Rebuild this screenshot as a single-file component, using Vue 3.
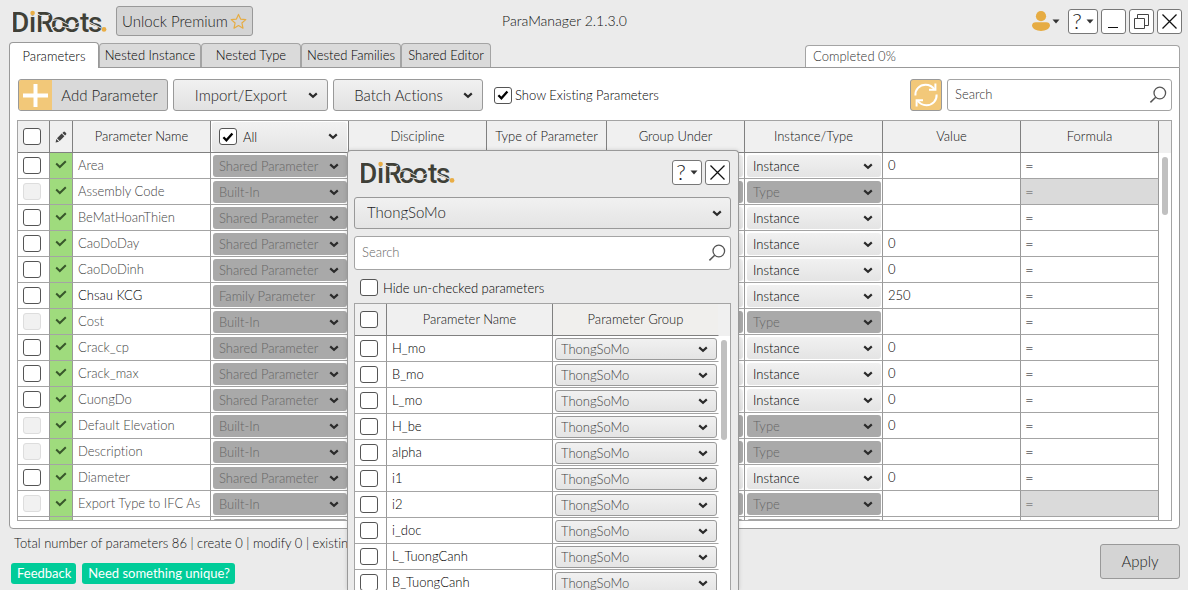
<script setup>
import { ref } from 'vue'

const tabs = [
  { label: 'Parameters', size: 'narrow' },
  { label: 'Nested Instance', size: 'wide' },
  { label: 'Nested Type', size: 'mid' },
  { label: 'Nested Families', size: 'mid' },
  { label: 'Shared Editor', size: 'narrow' },
]
const active = ref(0)

const S = 'Shared Parameter'
const B = 'Built-In'
const rows = [
  { name: 'Area', kind: S, value: '0' },
  { name: 'Assembly Code', kind: B, value: '', locked: true },
  { name: 'BeMatHoanThien', kind: S, value: '' },
  { name: 'CaoDoDay', kind: S, value: '0' },
  { name: 'CaoDoDinh', kind: S, value: '0' },
  { name: 'Chsau KCG', kind: 'Family Parameter', value: '250', own: true },
  { name: 'Cost', kind: B, value: '' },
  { name: 'Crack_cp', kind: S, value: '0' },
  { name: 'Crack_max', kind: S, value: '0' },
  { name: 'CuongDo', kind: S, value: '0' },
  { name: 'Default Elevation', kind: B, value: '0' },
  { name: 'Description', kind: B, value: '' },
  { name: 'Diameter', kind: S, value: '0' },
  { name: 'Export Type to IFC As', kind: B, value: '', locked: true },
  { name: '', kind: B, value: '' },
].map((r) => ({ ...r, builtIn: r.kind === B }))

const groupRows = ['H_mo', 'B_mo', 'L_mo', 'H_be', 'alpha', 'i1', 'i2', 'i_doc', 'L_TuongCanh', 'B_TuongCanh']
</script>

<template>
  <div class="app">
    <svg class="defs" aria-hidden="true">
      <symbol id="chev" viewBox="0 0 10 7"><path d="M1.2 1.4 5 4.8 8.8 1.4" fill="none" stroke="#2b2b2b" stroke-width="2.2" /></symbol>
      <symbol id="tick" viewBox="0 0 12 10"><path d="M1.4 5.2 4.4 8.2 10.4 1.4" fill="none" stroke="currentColor" stroke-width="2.3" /></symbol>
      <symbol id="flat-tick" viewBox="0 0 12 10"><path d="M1.2 3.6 4.8 7 10.8 1.2" fill="none" stroke="currentColor" stroke-width="2" /></symbol>
      <symbol id="caret" viewBox="0 0 8 5"><path d="M0.5 0.5H7.5L4 4.5Z" fill="#333" /></symbol>
      <symbol id="lens" viewBox="0 0 18 18"><circle cx="10.8" cy="7" r="5.8" fill="none" stroke="#555" stroke-width="1.3" /><path d="M6.7 11.2 1.4 16.4" stroke="#555" stroke-width="1.5" /></symbol>
      <symbol id="close" viewBox="0 0 17 17"><path d="M1.5 1.5 15.5 15.5M15.5 1.5 1.5 15.5" stroke="#111" stroke-width="1.3" /></symbol>
      <symbol id="logo" viewBox="0 0 96 26">
        <text class="logo-text" x="-2 16 23 38 51 67 75" y="24" fill="#3f4037">DiRoots</text>
        <path d="M15 1h7v6h-7z" fill="#ebebeb" />
        <circle cx="19.6" cy="5" r="2.3" fill="#e9ad45" />
        <path d="M24 5.6Q30 10 37 6.6M29 9V19M38 13.5Q44 9.5 51 14.5T66 14M38 21Q45 16 52 19T66 19M76 14 88 20" fill="none" stroke="#ebebeb" stroke-width="1" />
        <circle cx="91" cy="21.4" r="2.4" fill="#e9ad45" />
      </symbol>
    </svg>

    <header class="top">
      <svg class="logo" role="img" aria-label="DiRoots"><use href="#logo" /></svg>
      <button class="btn premium">
        Unlock Premium
        <svg width="17" height="17" viewBox="0 0 17 17"><path d="M8.5 1.4 10.6 6.1 15.8 6.6 11.9 10 13 15.2 8.5 12.5 4 15.2 5.1 10 1.2 6.6 6.4 6.1Z" fill="none" stroke="#e6ac43" stroke-width="1.2" stroke-linejoin="round" /></svg>
      </button>
      <h1>ParaManager 2.1.3.0</h1>
      <div class="win">
        <button class="user" aria-label="Account">
          <svg width="18" height="20" viewBox="0 0 18 20"><circle cx="9" cy="5.2" r="5.1" fill="#e6ac43" /><path d="M0 14.6C0 12.4 1.6 11.2 3.8 11.2H14.2C16.4 11.2 18 12.4 18 14.6C17.6 18 13.6 20 9 20S0.4 18 0 14.6Z" fill="#e6ac43" /></svg>
          <svg width="8" height="5"><use href="#caret" /></svg>
        </button>
        <button class="sq help"><span>?</span><svg width="8" height="5"><use href="#caret" /></svg></button>
        <button class="sq" aria-label="Minimize"><svg width="17" height="17"><path d="M3 14.5H13" stroke="#111" /></svg></button>
        <button class="sq" aria-label="Restore"><svg width="17" height="17" fill="none" stroke="#444"><path d="M1.5 5.5H11.5V15.5H1.5ZM4.5 5.5V1.5H15.5V12.5H11.5" /></svg></button>
        <button class="sq" aria-label="Close"><svg width="17" height="17"><use href="#close" /></svg></button>
      </div>
    </header>

    <nav class="tabs">
      <button v-for="(t, i) in tabs" :key="t.label" :class="['tab', t.size, { on: i === active }]" @click="active = i">{{ t.label }}</button>
      <div class="progress">Completed 0%</div>
    </nav>

    <main class="panel">
      <div class="tools">
        <button class="btn add">
          <span class="plus"><svg width="25" height="25"><path d="M12.5 1V24M0 12.5H25" stroke="#fff" stroke-width="4" /></svg></span>
          <span class="grow">Add Parameter</span>
        </button>
        <button class="btn drop imp"><span class="grow">Import/Export</span><svg width="10" height="7"><use href="#chev" /></svg></button>
        <button class="btn drop"><span class="grow">Batch Actions</span><svg width="10" height="7"><use href="#chev" /></svg></button>
        <label class="show"><span class="cb"><input type="checkbox" checked /><svg><use href="#tick" /></svg></span>Show Existing Parameters</label>
        <button class="refresh" aria-label="Refresh">
          <svg width="26" height="26" viewBox="0 0 26 26" fill="none" stroke="#fff" stroke-width="2"><path d="M2.4 13.5C2 7.5 6.5 2.8 12.5 2.8C16.5 2.8 19.5 4.6 21.6 7.8M23.6 12.5C24 18.5 19.5 23.2 13.5 23.2C9.5 23.2 6.5 21.4 4.4 18.2" /><path d="M22.4 1.4V7.8H16M3.6 24.6V18.2H10" /></svg>
        </button>
        <div class="search main-search"><input type="text" placeholder="Search" aria-label="Search parameters" /><svg width="18" height="18"><use href="#lens" /></svg></div>
      </div>

      <div class="grid-box">
        <table class="main-grid">
          <colgroup><col class="c-check" /><col class="c-edit" /><col class="c-std" /><col class="c-std" /><col class="c-std" /><col class="c-type" /><col class="c-std" /><col class="c-std" /><col class="c-std" /><col class="c-std" /></colgroup>
          <thead>
            <tr>
              <th class="ck"><span class="cb"><input type="checkbox" aria-label="Select all" /></span></th>
              <th class="ic"><svg width="12" height="12" viewBox="0 0 12 12" fill="#444"><path d="M0.6 11.4 1.3 8 4 10.7ZM2 7.3 6.7 2.6 9.4 5.3 4.7 10ZM7.4 1.9 8.4 0.9Q9.2 0.3 10 1L11 2Q11.7 2.8 11.1 3.6L10.1 4.6Z" /></svg></th>
              <th>Parameter Name</th>
              <th class="all-cell"><div class="all"><label><span class="cb"><input type="checkbox" checked /><svg><use href="#tick" /></svg></span>All</label><svg width="10" height="7"><use href="#chev" /></svg></div></th>
              <th>Discipline</th>
              <th>Type of Parameter</th>
              <th>Group Under</th>
              <th>Instance/Type</th>
              <th>Value</th>
              <th>Formula</th>
            </tr>
          </thead>
          <tbody>
            <tr v-for="(r, i) in rows" :key="i">
              <td class="ck"><span class="cb"><input type="checkbox" :disabled="r.builtIn" :aria-label="'Select ' + r.name" /></span></td>
              <td class="ok"><svg width="12" height="10"><use href="#flat-tick" /></svg></td>
              <td :class="['name', { own: r.own }]">{{ r.name }}</td>
              <td class="sc"><span class="sel off kind"><select disabled :aria-label="'Kind of ' + r.name"><option>{{ r.name ? r.kind : '' }}</option></select><svg><use href="#chev" /></svg></span></td>
              <td></td>
              <td></td>
              <td class="sc"><span :class="['sel', { off: r.builtIn }]"><select :disabled="r.builtIn" :aria-label="'Group of ' + r.name"></select><svg><use href="#chev" /></svg></span></td>
              <td class="sc"><span :class="['sel', { off: r.builtIn }]"><select :disabled="r.builtIn" :aria-label="'Instance or type of ' + r.name"><option>{{ !r.name ? '' : r.builtIn ? 'Type' : 'Instance' }}</option></select><svg><use href="#chev" /></svg></span></td>
              <td class="val">{{ r.value }}</td>
              <td :class="['eq', { locked: r.locked }]">{{ r.name ? '=' : '' }}</td>
            </tr>
          </tbody>
        </table>
        <div class="gutter"><i></i></div>
      </div>
    </main>

    <footer class="foot">
      <div>
        <p>Total number of parameters 86 | create 0 | modify 0 | existing</p>
        <div class="badges"><button>Feedback</button><button>Need something unique?</button></div>
      </div>
      <button class="btn apply">Apply</button>
    </footer>

    <section class="dialog" role="dialog" aria-label="ThongSoMo">
      <header>
        <svg class="logo" role="img" aria-label="DiRoots"><use href="#logo" /></svg>
        <div class="win">
          <button class="sq help"><span>?</span><svg width="8" height="5"><use href="#caret" /></svg></button>
          <button class="sq" aria-label="Close"><svg width="17" height="17"><use href="#close" /></svg></button>
        </div>
      </header>
      <span class="sel big"><select aria-label="Parameter file group"><option>ThongSoMo</option></select><svg><use href="#chev" /></svg></span>
      <div class="search tall"><input type="text" placeholder="Search" aria-label="Search group" /><svg width="18" height="18"><use href="#lens" /></svg></div>
      <label class="hide"><span class="cb"><input type="checkbox" /></span>Hide un-checked parameters</label>
      <div class="grid-box sub">
        <table>
          <colgroup><col class="d-check" /><col class="d-col" /><col class="d-col" /></colgroup>
          <thead>
            <tr><th class="ck"><span class="cb"><input type="checkbox" aria-label="Select all in group" /></span></th><th>Parameter Name</th><th class="last">Parameter Group</th></tr>
          </thead>
          <tbody>
            <tr v-for="n in groupRows" :key="n">
              <td class="ck"><span class="cb"><input type="checkbox" :aria-label="'Select ' + n" /></span></td>
              <td class="name own">{{ n }}</td>
              <td class="sc last"><span class="sel line"><select :aria-label="'Group of ' + n"><option>ThongSoMo</option></select><svg><use href="#chev" /></svg></span></td>
            </tr>
          </tbody>
        </table>
        <div class="gutter"><i></i></div>
      </div>
    </section>
  </div>
</template>

<style>
body { margin: 0; }
</style>

<style scoped>
* { box-sizing: border-box; }
.app {
  position: relative; display: flex; flex-direction: column; height: 100vh; overflow: hidden;
  padding: 0 8px 0 9px; background: #ebebeb; color: #222;
  font: 300 13px/16px Lato, "Open Sans", sans-serif; font-variant-ligatures: none;
}
.defs { position: absolute; width: 0; height: 0; }
button, input, select { font: inherit; color: inherit; }
button { padding: 0; cursor: pointer; }
svg { display: block; flex: none; }
.logo-text { font: 500 28px Roboto, sans-serif; }
.logo { width: 96px; height: 26px; }
.top { display: flex; align-items: center; height: 42px; flex: none; padding-left: 4px; margin-right: -2px; }
h1 { flex: 1; margin: 0; padding: 0 156px 0 0; text-align: center; font-size: 14px; font-weight: 300; line-height: 20px; color: #111; }
.btn { display: flex; align-items: center; border: 1px solid #999; border-radius: 3px; background: #d4d4d4; font-size: 15px; color: #222; }
.premium { width: 137px; height: 30px; margin-left: 7px; padding: 0 5px; justify-content: space-between; }
.win { display: flex; align-items: center; gap: 3px; }
.user { display: flex; align-items: center; gap: 2px; border: 0; background: none; margin-right: 5px; }
.sq { display: flex; align-items: center; justify-content: center; width: 25px; height: 25px; border: 1px solid #777; border-radius: 3px; background: #fff; }
.help { width: 30px; gap: 4px; }
.help span { font-size: 22px; line-height: 22px; color: #222; }

.tabs { display: flex; align-items: flex-end; height: 25px; flex: none; }
.tab { height: 24px; padding-bottom: 1px; border: 1px solid #a4a4a4; border-bottom: 0; border-radius: 4px 4px 0 0; background: #dadada; color: #000; }
.tab.on { height: 26px; margin-bottom: -1px; position: relative; background: #fff; border-color: #999; padding-top: 2px; }
.narrow { width: 90px; }
.wide { width: 102px; }
.mid { width: 100px; }
.progress { width: 375px; height: 22px; margin-left: auto; padding: 2px 7px; border: 1px solid #a4a4a4; border-bottom: 0; border-radius: 4px 4px 0 0; background: #fff; color: #333; }

.panel { flex: 1; min-height: 0; display: flex; flex-direction: column; gap: 9px; padding: 11px 7px 7px; border: 1px solid #999; border-radius: 0 0 4px 4px; background: #fff; }
.tools { display: flex; align-items: center; gap: 5px; height: 32px; flex: none; padding-left: 1px; }
.tools .btn { width: 150px; height: 32px; overflow: hidden; }
.tools .add { background: #d9d9d9; }
.plus { display: flex; align-items: center; justify-content: center; width: 33px; height: 30px; background: #f2c879; }
.grow { flex: 1; text-align: center; }
.tools .drop { background: linear-gradient(#f1f1f1, #e2e2e2); padding: 0 9px 0 0; }
.tools .imp { width: 155px; }
.show { display: flex; align-items: center; gap: 3px; margin-left: 6px; color: #000; }
.refresh { display: flex; align-items: center; justify-content: center; width: 32px; height: 32px; margin-left: auto; border: 1px solid #999; border-radius: 3px; background: #f2c879; }
.search { display: flex; align-items: center; height: 32px; padding: 0 4px 0 7px; border: 1px solid #a4a4a4; border-radius: 3px; background: #fff; }
.search input { flex: 1; min-width: 0; border: 0; padding: 0 0 2px; outline: 0; background: none; }
.search input::placeholder { color: #333; opacity: 1; }
.main-search { width: 225px; }

.cb { display: inline-grid; place-items: center; width: 18px; height: 17px; vertical-align: top; }
.cb > * { grid-area: 1 / 1; }
.cb input { appearance: none; margin: 0; width: 18px; height: 17px; border: 1px solid #555; border-radius: 3px; background: #fff; }
.cb input:disabled { border-color: #ddd; background: #f1f1f1; }
.cb svg { width: 12px; height: 10px; pointer-events: none; color: #000; }

.grid-box { display: flex; flex: 1; min-height: 0; overflow: hidden; border: 1px solid #a4a4a4; background: #fff; }
table { flex: 1; min-width: 0; width: 100%; table-layout: fixed; border-collapse: separate; border-spacing: 0; align-self: flex-start; }
th, td { padding: 0 0 2px; border-right: 1px solid #999; border-bottom: 1px solid #a4a4a4; overflow: hidden; white-space: nowrap; text-align: left; }
th { height: 32px; background: #f0f0f0; border-color: #808080; font-weight: 300; text-align: center; color: #111; }
td { height: 26px; }
.c-check { width: 32px; } .c-edit { width: 23px; } .c-std { width: 138px; } .c-type { width: 120px; }
.ck { text-align: left; padding: 0 0 0 5px; }
.ic { padding: 0; }
.ic svg, .ok svg { margin: 0 auto; }
td.ok { background: #9fdb7d; color: #38572b; }
.name { padding-left: 5px; color: #444; }
.own { color: #000; }
.val { padding-left: 5px; color: #000; }
.eq { padding: 0 0 0 4px; color: #000; font-size: 15px; }
.locked { background: #dadada; color: #555; }
.all-cell { padding: 0; background: #fff; }
.all { display: flex; align-items: center; justify-content: space-between; height: 30px; margin: 0 1px; padding: 0 9px 0 7px; border-radius: 3px; background: linear-gradient(#f2f2f2, #e4e4e4); color: #000; }
.all label { display: flex; align-items: center; gap: 6px; }
.sc { padding: 1px 1px 0 2px; }
.sel { display: grid; align-items: center; }
.sel > * { grid-area: 1 / 1; }
.sel svg { width: 10px; height: 7px; justify-self: end; margin-right: 8px; pointer-events: none; }
.sel select { appearance: none; width: 100%; height: 22px; margin: 0; padding: 0 28px 1px 6px; border: 0; border-radius: 3px; outline: 0; background: linear-gradient(#f1f1f1, #e4e4e4); color: #000; opacity: 1; }
.sel.off select { background: #a9a9a9; color: #666; }
.sel.line select { border: 1px solid #999; padding-left: 5px; color: #444; }
.sel.line svg { margin-right: 9px; }
.sel.big select { height: 32px; padding: 0 28px 2px 12px; border: 1px solid #999; font-size: 15px; color: #222; }
.sel.big svg { margin-right: 9px; }
.gutter { flex: none; width: 12px; background: #fff; border-top: 32px solid #f0f0f0; }
.gutter i { display: block; width: 6px; height: 58px; margin: 4px 0 0 3px; border-radius: 3px; background: #c0c0c0; }

.foot { display: flex; justify-content: space-between; align-items: flex-start; flex: none; height: 61px; }
.foot p { margin: 0; padding: 6px 0 0 5px; color: #111; }
.badges { display: flex; gap: 6px; margin: 12px 0 0 2px; }
.badges button { height: 21px; padding: 0 5px 2px 6px; border: 0; border-radius: 3px; background: #00cc99; color: #fff; font-weight: 400; }
.apply { width: 80px; height: 35px; margin-top: 15px; padding-bottom: 2px; justify-content: center; }

.dialog { position: absolute; left: 347px; top: 150px; bottom: 0; width: 392px; display: flex; flex-direction: column; padding: 0 7px 0 6px; overflow: hidden; border: 1px solid #999; border-bottom: 0; border-radius: 4px 4px 0 0; background: #ebebeb; box-shadow: 0 0 4px rgba(0, 0, 0, 0.15); }
.dialog header { display: flex; justify-content: space-between; align-items: center; height: 42px; flex: none; margin-bottom: 4px; padding: 0 1px 0 7px; }
.tall { height: 34px; flex: none; margin: 7px 0 9px; }
.tall input::placeholder { color: #666; }
.hide { display: flex; align-items: center; gap: 5px; flex: none; padding-left: 6px; color: #000; }
.sub { margin-top: 7px; border-bottom: 0; }
.d-check { width: 32px; } .d-col { width: 166px; }
.last { border-right-color: transparent; background-clip: padding-box; }
th.last { background: #f0efed; border-right-color: #f0f0f0; }
.sub .gutter { width: 11px; }
.sub .gutter i { width: 6px; height: 100px; margin-left: 2px; }
</style>
